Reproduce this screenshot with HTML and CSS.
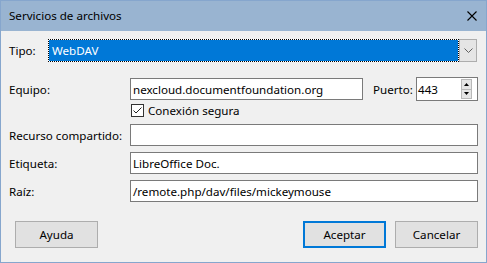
FILE: index.html
```html
<!DOCTYPE html>
<html>
<head>
<meta charset="utf-8">
<link rel="stylesheet" href="styles.css">
</head>
<body>
<div class="window">
  <div class="titlebar">
    <span class="title">Servicios de archivos</span>
    <svg class="close" width="10" height="10" viewBox="0 0 10 10"><path d="M0.5 0.5L9.5 9.5M9.5 0.5L0.5 9.5" stroke="#000" stroke-width="1.1" fill="none"/></svg>
  </div>
  <div class="content">
    <div class="row row-tipo">
      <span class="label label-tipo">Tipo:</span>
      <div class="select">
        <div class="select-value">WebDAV</div>
        <div class="select-btn"><svg width="9" height="5" viewBox="0 0 9 5"><path d="M0.5 0.5L4.5 4.5L8.5 0.5" stroke="#606060" fill="none"/></svg></div>
      </div>
    </div>
    <div class="row row-equipo">
      <span class="label">Equipo:</span>
      <div class="input input-host">nexcloud.documentfoundation.org</div>
      <span class="label-port">Puerto:</span>
      <div class="spin">
        <span class="spin-val">443</span>
        <div class="spin-btns">
          <div class="spin-btn"><svg width="5" height="3" viewBox="0 0 5 3"><path d="M0 3L2.5 0L5 3Z" fill="#000"/></svg></div>
          <div class="spin-btn"><svg width="5" height="3" viewBox="0 0 5 3"><path d="M0 0L2.5 3L5 0Z" fill="#000"/></svg></div>
        </div>
      </div>
    </div>
    <div class="row row-check">
      <span class="checkbox"><svg width="11" height="11" viewBox="0 0 11 11"><path d="M1.5 5.5L4 8L9.5 2.5" stroke="#222" stroke-width="1" fill="none"/></svg></span>
      <span class="check-label">Conexión segura</span>
    </div>
    <div class="row row-field">
      <span class="label">Recurso compartido:</span>
      <div class="input input-wide"></div>
    </div>
    <div class="row row-field">
      <span class="label">Etiqueta:</span>
      <div class="input input-wide">LibreOffice Doc.</div>
    </div>
    <div class="row row-field">
      <span class="label">Raíz:</span>
      <div class="input input-wide">/remote.php/dav/files/mickeymouse</div>
    </div>
    <div class="buttons">
      <div class="btn">Ayuda</div>
      <div class="spacer"></div>
      <div class="btn btn-default">Aceptar</div>
      <div class="btn">Cancelar</div>
    </div>
  </div>
</div>
</body>
</html>
```
FILE: styles.css
```css
html, body {
  margin: 0;
  padding: 0;
  background: #f0f0f0;
}
body {
  font-family: "Noto Sans", "Open Sans", sans-serif;
  font-size: 11.6px;
  color: #000;
}
.window {
  width: 487px;
  height: 263px;
  box-sizing: border-box;
  border: 1px solid #86a6cd;
  background: #f0f0f0;
  display: flex;
  flex-direction: column;
}
.titlebar {
  height: 30px;
  background: #99b4d1;
  display: flex;
  align-items: center;
  padding-left: 8px;
  padding-right: 9px;
}
.title {
  flex: 1;
  color: #000;
  margin-top: -1px;
}
.close {
  display: block;
}
.content {
  padding: 8px 8px 0 8px;
  display: flex;
  flex-direction: column;
}
.row {
  display: flex;
  align-items: center;
}
.label {
  width: 121px;
  flex: none;
}
.label-tipo {
  width: 39px;
}
.row-tipo {
  height: 23px;
  padding-right: 1px;
}
.select {
  flex: 1;
  height: 23px;
  box-sizing: border-box;
  display: flex;
  border: 1px solid #adadad;
  background: #e5e5e5;
}
.select-value {
  flex: 1;
  background: #0078d7;
  color: #fff;
  outline: 1px dotted #000;
  outline-offset: -1px;
  border: 1px solid #fff;
  margin: -1px 0 -1px -1px;
  padding-left: 3px;
  display: flex;
  align-items: center;
}
.select-btn {
  width: 16px;
  display: flex;
  align-items: center;
  justify-content: center;
  border-left: 1px solid #adadad;
}
.row-equipo {
  margin-top: 15px;
  height: 24px;
}
.input {
  height: 22px;
  box-sizing: border-box;
  border: 1px solid #7a7a7a;
  background: #fff;
  padding-left: 2px;
  display: flex;
  align-items: center;
  white-space: nowrap;
}
.input-host {
  width: 233px;
}
.label-port {
  margin-left: 10px;
  width: 43px;
}
.spin {
  width: 62px;
  height: 24px;
  box-sizing: border-box;
  border: 1px solid #7a7a7a;
  background: #fff;
  display: flex;
  align-items: center;
  padding-left: 1px;
}
.spin-val {
  flex: 1;
}
.spin-btns {
  display: flex;
  flex-direction: column;
  width: 11px;
  height: 20px;
  margin-right: 5px;
}
.spin-btn {
  flex: 1;
  background: #e5e5e5;
  border: 1px solid #b8b8b8;
  display: flex;
  align-items: center;
  justify-content: center;
}
.spin-btn + .spin-btn {
  border-top: none;
}
.row-check {
  margin-top: 3px;
  height: 13px;
  padding-left: 122px;
}
.checkbox {
  width: 13px;
  height: 13px;
  box-sizing: border-box;
  border: 1px solid #333;
  background: #fff;
  display: flex;
  align-items: center;
  justify-content: center;
}
.check-label {
  margin-left: 4px;
}
.row-field {
  height: 22px;
  margin-top: 6px;
}
.row-check + .row-field {
  margin-top: 7px;
}
.input-wide {
  width: 348px;
}
.buttons {
  display: flex;
  margin-top: 19px;
  padding-left: 6px;
}
.spacer {
  flex: 1;
}
.btn {
  width: 83px;
  height: 27px;
  box-sizing: border-box;
  border: 1px solid #adadad;
  background: #e1e1e1;
  display: flex;
  align-items: center;
  justify-content: center;
}
.btn + .btn {
  margin-left: 9px;
}
.btn-default {
  border: 2px solid #0078d7;
}
```
